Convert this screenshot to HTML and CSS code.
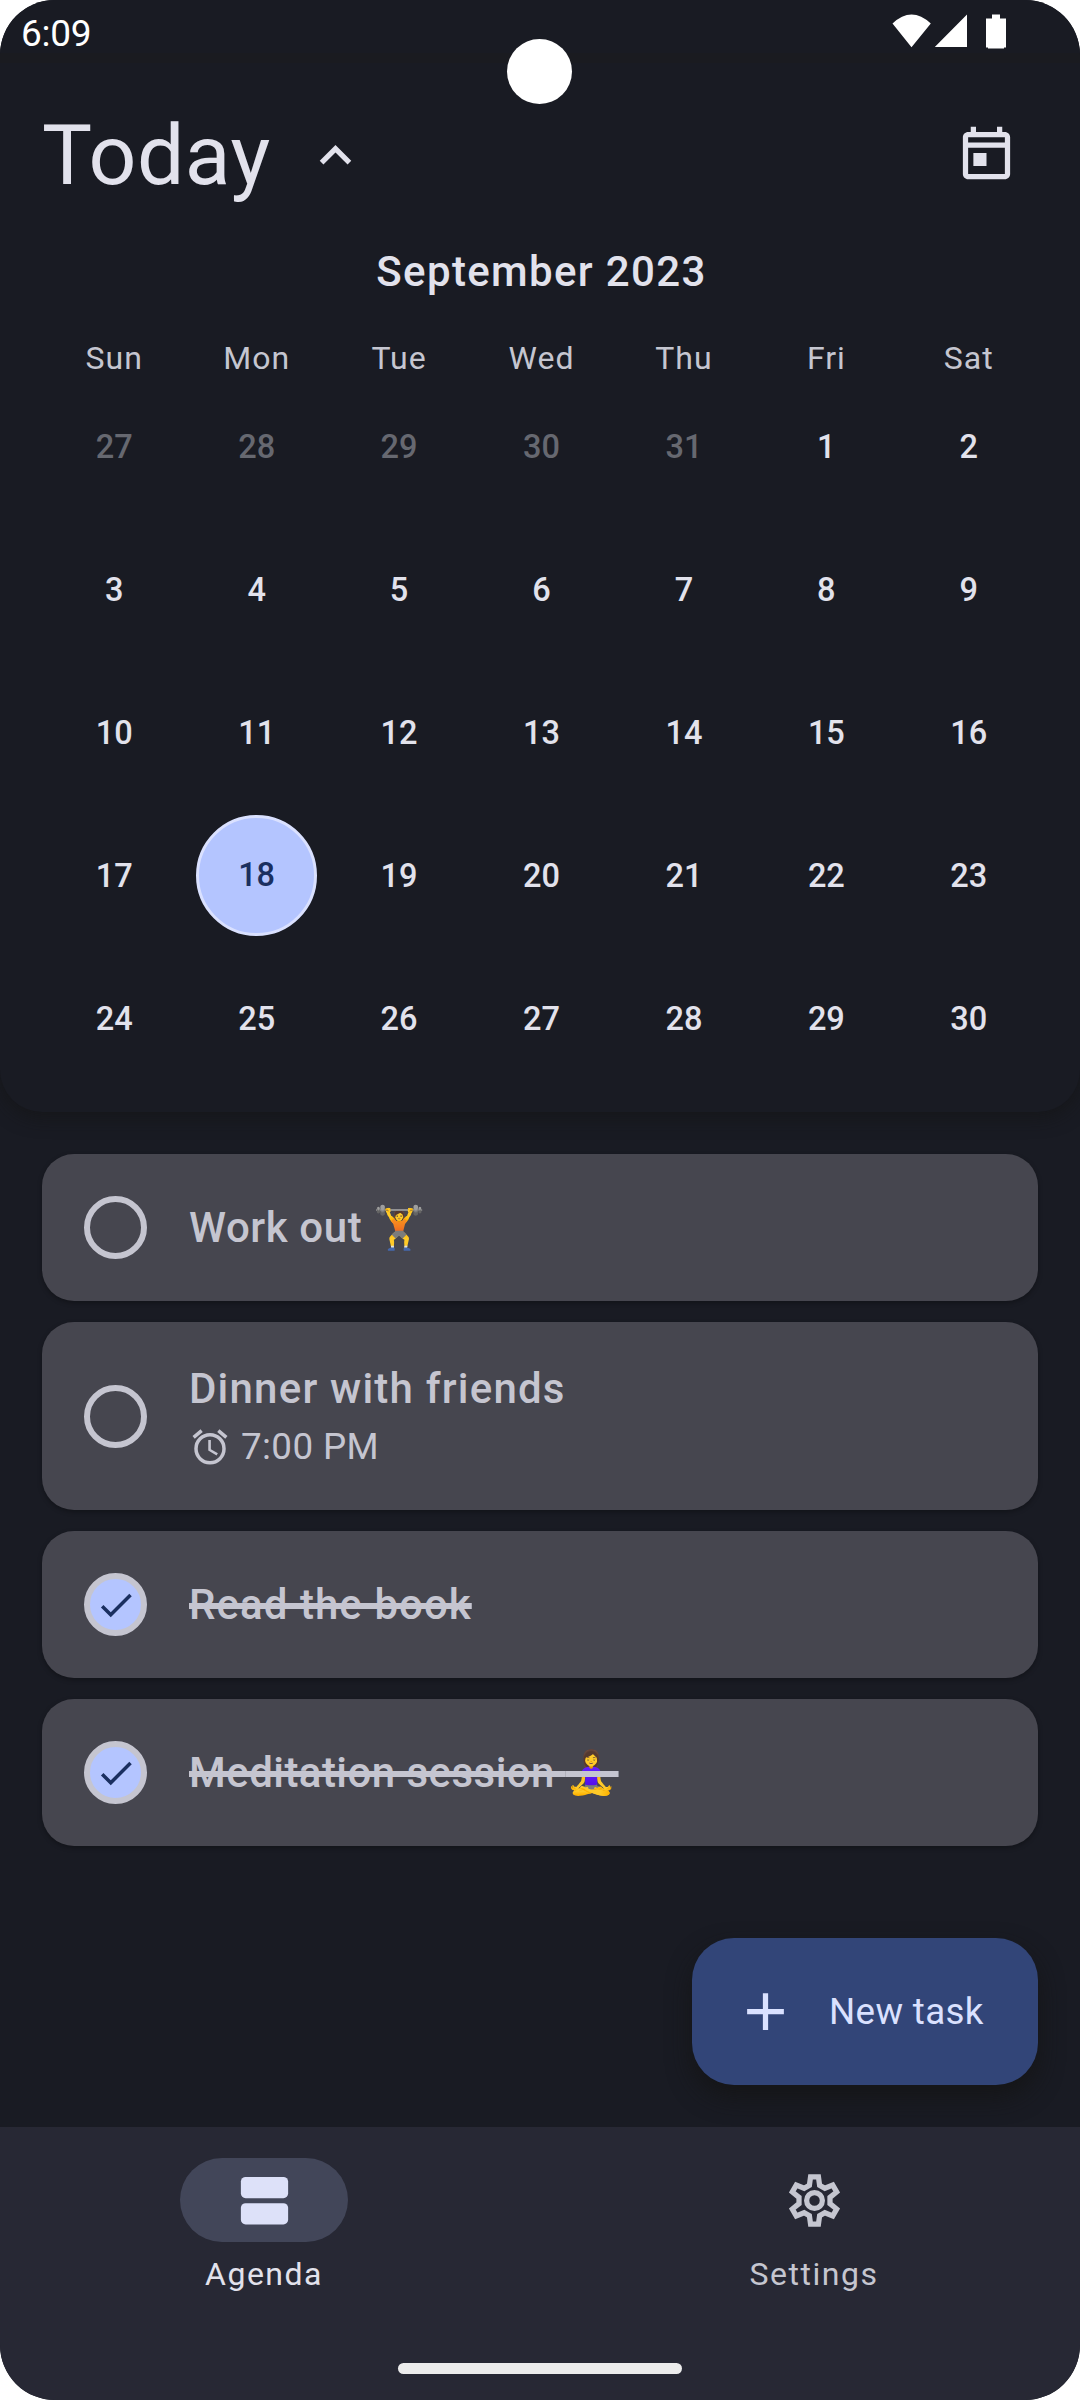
FILE: index.html
```html
<!DOCTYPE html>
<html lang="en">
<head>
<meta charset="utf-8">
<title>Agenda</title>
<link rel="stylesheet" href="styles.css">
</head>
<body>
<div class="screen">
  <header class="panel">
    <div class="status">
      <span class="clock">6:09</span>
      <svg class="status-icons" viewBox="0 0 116 36" width="116" height="36"><path d="M.5 9.500Q19.500-8.500 38.800 9.500L19.500 33.200zM42.800 33L75 .5V33zM94 4.500h6V.5h8v4h6v29h-2v1h-16v-1h-2z"/></svg>
    </div>
    <div class="title-row">
      <h1>Today</h1>
      <svg class="chevron" viewBox="0 0 24 24"><path d="M12 8l-6 6 1.410 1.410L12 10.830l4.590 4.580L18 14z"/></svg>
      <svg class="today-icon" viewBox="0 0 24 24"><path fill-rule="evenodd" d="M19 3h-1V1h-2v2H8V1H6v2H5c-1.100 0-2 .9-2 2v14c0 1.100.9 2 2 2h14c1.100 0 2-.9 2-2V5c0-1.100-.9-2-2-2zM19 19H5V9h14zM19 7H5V5h14zM7 11h5v5H7z"/></svg>
    </div>
    <div class="month">September 2023</div>
    <div class="weekdays"><span>Sun</span><span>Mon</span><span>Tue</span><span>Wed</span><span>Thu</span><span>Fri</span><span>Sat</span></div>
    <div class="days">
      <span class="out">27</span><span class="out">28</span><span class="out">29</span><span class="out">30</span><span class="out">31</span><span>1</span><span>2</span>
      <span>3</span><span>4</span><span>5</span><span>6</span><span>7</span><span>8</span><span>9</span>
      <span>10</span><span>11</span><span>12</span><span>13</span><span>14</span><span>15</span><span>16</span>
      <span>17</span><span class="selected">18</span><span>19</span><span>20</span><span>21</span><span>22</span><span>23</span>
      <span>24</span><span>25</span><span>26</span><span>27</span><span>28</span><span>29</span><span>30</span>
    </div>
  </header>
  <main class="tasks">
    <div class="task"><span class="check"></span><div class="name workout">Work out <span class="emoji">🏋️</span></div></div>
    <div class="task tall"><span class="check"></span><div class="details"><div class="name dinner">Dinner with friends</div>
      <div class="time"><svg viewBox="0 0 24 24"><path fill-rule="evenodd" d="M22 5.720l-4.600-3.860-1.290 1.530 4.600 3.860zM7.880 3.390L6.600 1.860 2 5.710l1.290 1.530zM12.500 8H11v6l4.750 2.850.75-1.230-4-2.370zM12 4a9 9 0 0 0 0 18 9 9 0 0 0 0-18zm0 16a7 7 0 0 1 0-14 7 7 0 0 1 0 14z"/></svg><span>7:00 PM</span></div></div></div>
    <div class="task"><span class="check done"><svg viewBox="0 0 24 24"><path d="M9 16.170L4.830 12l-1.420 1.410L9 19 21 7l-1.410-1.410z"/></svg></span><div class="name struck read">Read the book</div></div>
    <div class="task"><span class="check done"><svg viewBox="0 0 24 24"><path d="M9 16.170L4.830 12l-1.420 1.410L9 19 21 7l-1.410-1.410z"/></svg></span><div class="name struck meditation">Meditation session <span class="emoji">🧘‍♀️</span></div></div>
  </main>
  <div class="action-row">
    <button class="fab"><svg viewBox="0 0 24 24"><path d="M19 13h-6v6h-2v-6H5v-2h6V5h2v6h6z"/></svg><span>New task</span></button>
  </div>
  <nav class="nav">
    <div class="tabs">
      <div class="tab active"><span class="pill"><svg viewBox="0 0 24 24"><rect x="3" y="3" width="18" height="8.100" rx="1.800"/><rect x="3" y="13" width="18" height="8.100" rx="1.800"/></svg></span><span class="agenda">Agenda</span></div>
      <div class="tab"><span class="pill"><svg class="gear" viewBox="0 0 24 24"><path d="M10.500 3h3l.45 3.200 2 1.150L18.950 6.150l1.500 2.600L17.900 10.800v2.400l2.550 2.050-1.500 2.600-3-1.200-2 1.150-.45 3.200h-3l-.45-3.200-2-1.150-3 1.200-1.500-2.600L6.100 13.200v-2.400L3.550 8.750l1.500-2.600 3 1.200 2-1.150z"/><circle cx="12" cy="12" r="3"/></svg></span><span class="settings">Settings</span></div>
    </div>
    <div class="home-bar"></div>
  </nav>
  <div class="camera"></div>
</div>
</body>
</html>
```

FILE: styles.css
```css
* { box-sizing: border-box; }
body { margin: 0; background: #fff; font-family: Roboto, "Liberation Sans", "Noto Color Emoji", sans-serif; }
svg { display: block; flex: none; fill: currentColor; width: 63px; height: 63px; }
.screen { position: relative; width: 1080px; height: 2400px; display: flex; flex-direction: column; overflow: hidden; border-radius: 55px; background: #191b23; color: #e2e2ec; }

.panel { height: 1112px; flex: none; border-radius: 0 0 42px 42px; background: #191b23; box-shadow: 0 6px 18px rgba(20, 20, 20, .6); }
.status { height: 63px; display: flex; justify-content: space-between; align-items: flex-start; padding: 14px 72px 0 21px; color: #fff; border-bottom: 10px solid #1a1b20; }
.clock { font-size: 37px; line-height: 39px; letter-spacing: -.3px; }
.status-icons { width: 116px; height: 36px; }

.title-row { height: 186px; display: flex; align-items: flex-start; padding: 61px 62px 0 42px; }
h1 { width: 262px; margin: -18px 0 0; font-size: 84px; line-height: 100px; font-weight: 400; letter-spacing: .5px; }
.today-icon { margin-left: auto; }
.month { height: 84px; font-size: 42px; line-height: 46px; font-weight: 500; letter-spacing: 1.35px; text-align: center; padding-left: 3px; }
.weekdays, .days { display: grid; grid-template-columns: repeat(7, 1fr); padding: 0 40px 0 43px; text-align: center; }
.weekdays { height: 42px; font-size: 32px; line-height: 50px; letter-spacing: 1px; color: #c5c6d0; }
.days { grid-auto-rows: 143px; place-items: center; font-size: 32.5px; font-weight: 500; }
.days .out { color: #666870; }
.days .selected { width: 121px; height: 121px; line-height: 115px; border-radius: 50%; border: 3px solid #dae1ff; background: #b4c5ff; color: #1a2f60; }

.tasks { display: flex; flex-direction: column; gap: 21px; padding: 42px 42px 0; height: 826px; flex: none; }
.task { height: 147px; display: flex; align-items: center; gap: 42px; padding: 0 42px; border-radius: 32px; background: #46464f; color: #c5c5d0; box-shadow: 0 2px 5px rgba(0, 0, 0, .3); }
.tall { height: 188px; }
.check { width: 63px; height: 63px; flex: none; border: 6px solid #c5c5d0; border-radius: 50%; display: grid; place-items: center; }
.done { background: #b4c5ff; color: #1a2f60; }
.done svg { width: 42px; height: 42px; }
.name { font-size: 42px; line-height: 52px; font-weight: 500; white-space: pre; }
.workout { letter-spacing: .6px; }
.dinner { letter-spacing: 1.2px; }
.read { letter-spacing: 1.05px; }
.meditation { letter-spacing: .45px; }
.struck { text-decoration: line-through 6px; }
.details { padding-top: 3px; }
.time { display: flex; align-items: center; gap: 10px; height: 52px; font-size: 36.75px; letter-spacing: .4px; margin-top: 6px; }
.time svg { width: 42px; height: 42px; }

.action-row { height: 189px; flex: none; display: flex; justify-content: flex-end; align-items: flex-start; padding-right: 42px; }
.fab { width: 346px; height: 147px; display: flex; align-items: center; gap: 32px; padding: 0 0 0 42px; border: 0; border-radius: 42px; background: #324578; color: #dae1ff; font: 400 36.75px Roboto, sans-serif; letter-spacing: .35px; box-shadow: 0 12px 24px rgba(20, 20, 20, .8); }

.nav { height: 273px; display: flex; flex-direction: column; align-items: center; background: #272834; color: #c5c6d0; }
.tabs { width: 100%; height: 236px; display: grid; grid-template-columns: 528px 528px; gap: 22px; padding-top: 31px; }
.tab { display: flex; flex-direction: column; align-items: center; font-size: 32px; line-height: 40px; letter-spacing: 1.5px; gap: 12px; }
.active { color: #e2e2ec; }
.pill { width: 168px; height: 84px; display: grid; place-items: center; border-radius: 42px; }
.active .pill { background: #424659; color: #dde1f9; }
.gear { fill: none; stroke: currentColor; stroke-width: 2; }
.home-bar { width: 284px; height: 11px; border-radius: 6px; background: #ececec; }
.camera { position: absolute; left: 507px; top: 39px; width: 65px; height: 65px; border-radius: 50%; background: #fff; }
```
